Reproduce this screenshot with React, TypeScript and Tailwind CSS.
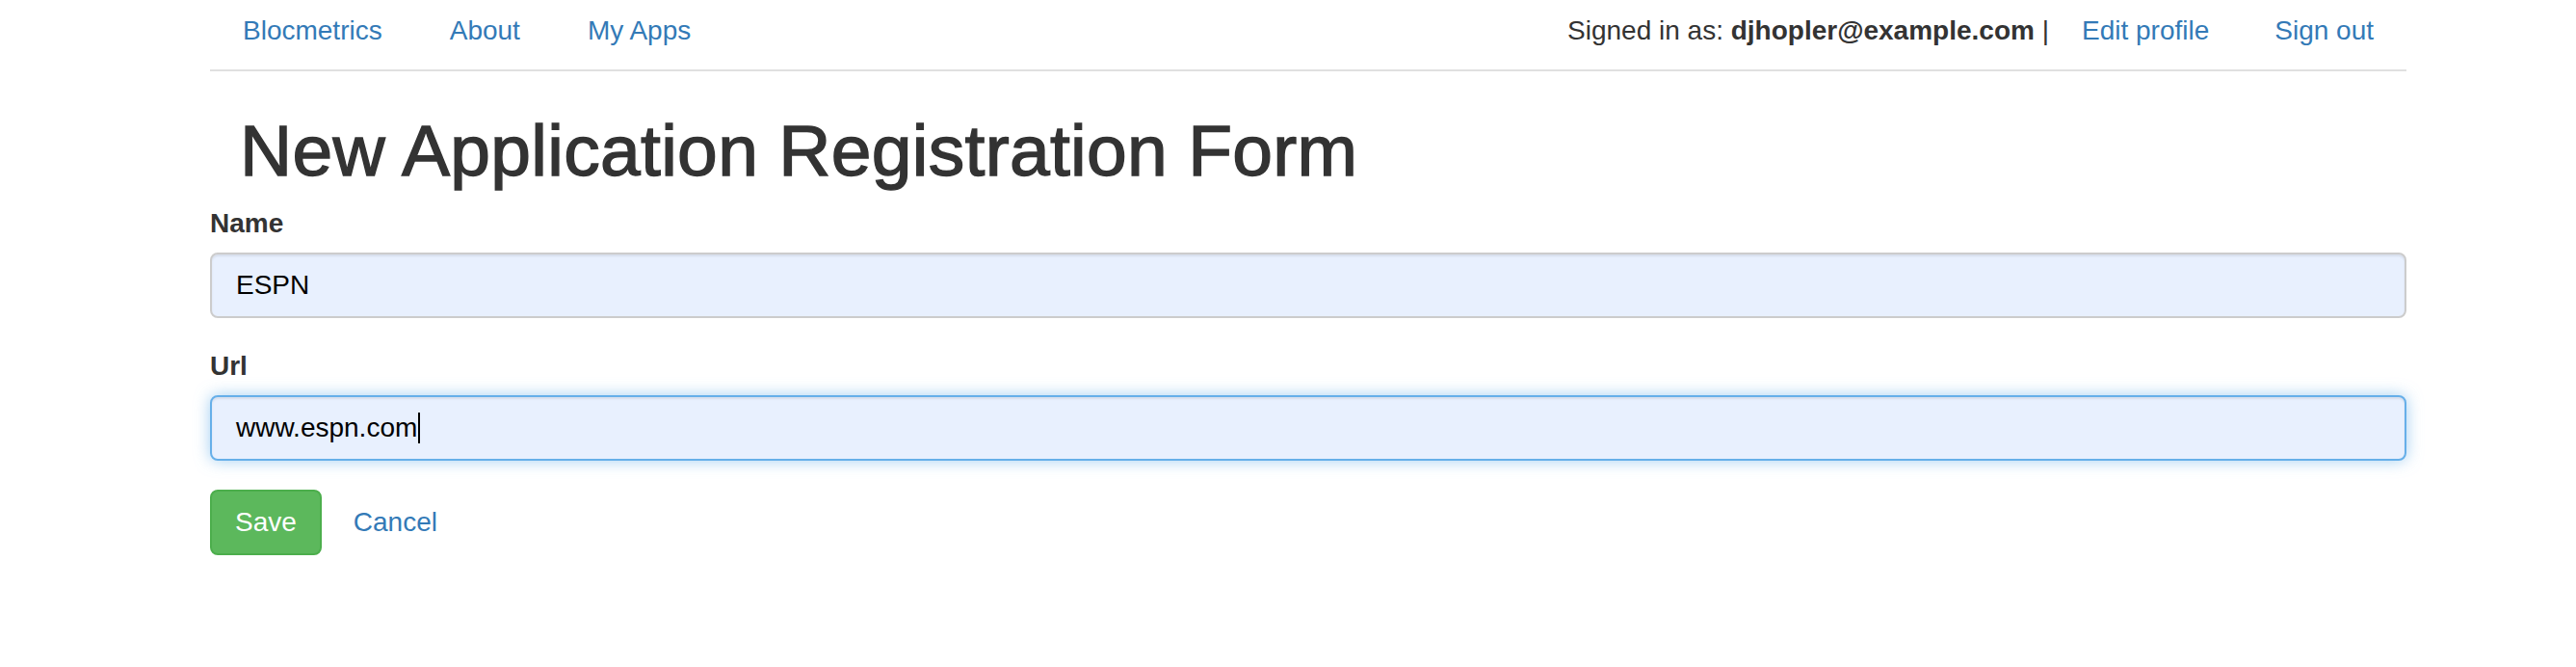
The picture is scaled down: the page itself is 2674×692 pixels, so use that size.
import React from 'react';

const FONT = '[font-family:"Liberation_Sans",Arial,Helvetica,sans-serif]';

function NavLink({ children, wide = true }: { children: React.ReactNode; wide?: boolean }) {
  return (
    <a href="#" className={wide ? 'px-[35px] text-[#337ab7] no-underline' : 'px-[34px] text-[#337ab7] no-underline'}>
      {children}
    </a>
  );
}

function TopNav() {
  return (
    <nav className="flex items-start justify-between border-b-2 border-[#e0e0e0] pt-[12px] pb-[20px] text-[28px] leading-[40px]">
      <div className="-ml-px flex">
        <NavLink>Blocmetrics</NavLink>
        <NavLink>About</NavLink>
        <NavLink>My Apps</NavLink>
      </div>
      <div className="flex">
        <span className="text-[#333333] whitespace-pre">
          Signed in as: <b className="font-bold">djhopler@example.com</b> |
        </span>
        <NavLink wide={false}>Edit profile</NavLink>
        <NavLink wide={false}>Sign out</NavLink>
      </div>
    </nav>
  );
}

function Label({ children }: { children: React.ReactNode }) {
  return (
    <label className="mb-[10px] block text-[28px] leading-[40px] font-bold text-[#333333]">
      {children}
    </label>
  );
}

export default function App() {
  return (
    <div className={`min-h-[692px] w-full bg-white ${FONT}`}>
      <div className="ml-[218px] w-[2280px]">
        <TopNav />

        {/* Helvetica Neue Medium look: regular face thickened with a thin stroke */}
        <h1 className="mt-[41px] mb-[15px] pl-[31px] text-[75px] leading-[82px] font-medium tracking-[0.3px] text-[#333333] [-webkit-text-stroke:1.4px_#333333]">
          New Application Registration Form
        </h1>

        <form className="flex flex-col">
          <div className="mb-[30px]">
            <Label>Name</Label>
            <input
              readOnly
              value="ESPN"
              className="block h-[68px] w-full rounded-[8px] border-2 border-[#cccccc] bg-[#e8f0fe] px-[25px] text-[28px] text-black shadow-[inset_0_2px_2px_rgba(0,0,0,0.075)] outline-none"
            />
          </div>

          <div className="mb-[30px]">
            <Label>Url</Label>
            <div className="flex h-[68px] w-full items-center rounded-[8px] border-2 border-[#66afe9] bg-[#e8f0fe] px-[25px] text-[28px] text-black shadow-[inset_0_2px_2px_rgba(0,0,0,0.075),0_0_16px_rgba(102,175,233,0.6)]">
              <span>www.espn.com</span>
              <span className="ml-[1px] inline-block h-[32px] w-[2px] bg-black" />
            </div>
          </div>

          <div className="flex items-center">
            <button
              type="button"
              className="h-[68px] rounded-[8px] border-2 border-[#4cae4c] bg-[#5cb85c] px-[24px] text-[28px] leading-[40px] text-white"
            >
              Save
            </button>
            <a href="#" className="ml-[33px] text-[28px] leading-[40px] text-[#337ab7]">
              Cancel
            </a>
          </div>
        </form>
      </div>
    </div>
  );
}
